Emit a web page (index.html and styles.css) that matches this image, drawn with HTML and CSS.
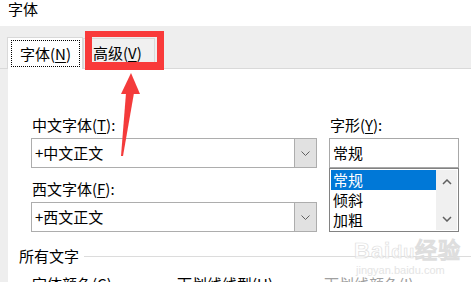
FILE: index.html
```html
<!DOCTYPE html>
<html lang="zh-CN">
<head>
    <meta charset="UTF-8">
    <meta name="viewport" content="width=device-width, initial-scale=1.0">
    <title>字体</title>
    <link rel="stylesheet" href="styles.css">
</head>
<body>
    <div class="title">字体</div>

    <div class="tabstrip">
        <div class="tab tab-active"><span class="focus">字体(<u>N</u>)</span></div>
        <div class="tab">高级(<u>V</u>)</div>
    </div>

    <div class="page">
        <div class="panel">
            <div class="fonts">
                <div class="col-left">
                    <div class="label">中文字体(<u>T</u>):</div>
                    <div class="combo">
                        <span class="combo-text">+中文正文</span>
                        <span class="combo-btn">
                            <svg width="9" height="5" viewBox="0 0 9 5"><path d="M0.5 0.5 L4.5 4.5 L8.5 0.5" fill="none" stroke="#606060" stroke-width="1"/></svg>
                        </span>
                    </div>
                    <div class="label label-second">西文字体(<u>F</u>):</div>
                    <div class="combo">
                        <span class="combo-text">+西文正文</span>
                        <span class="combo-btn">
                            <svg width="9" height="5" viewBox="0 0 9 5"><path d="M0.5 0.5 L4.5 4.5 L8.5 0.5" fill="none" stroke="#606060" stroke-width="1"/></svg>
                        </span>
                    </div>
                </div>
                <div class="col-right">
                    <div class="label">字形(<u>Y</u>):</div>
                    <div class="style-input">常规</div>
                    <div class="listbox">
                        <div class="list-items">
                            <div class="item selected">常规</div>
                            <div class="item">倾斜</div>
                            <div class="item">加粗</div>
                        </div>
                        <div class="scrollbar">
                            <svg width="10" height="6" viewBox="0 0 10 6"><path d="M1 5 L5 1 L9 5" fill="none" stroke="#606060" stroke-width="1.5"/></svg>
                            <svg width="10" height="6" viewBox="0 0 10 6"><path d="M1 1 L5 5 L9 1" fill="none" stroke="#606060" stroke-width="1.5"/></svg>
                        </div>
                    </div>
                </div>
            </div>

            <div class="group">
                <span>所有文字</span>
                <span class="group-line"></span>
            </div>

            <div class="bottom-row">
                <span class="bottom-label">字体颜色(<u>C</u>):</span>
                <span class="bottom-label">下划线线型(<u>U</u>):</span>
                <span class="bottom-label disabled">下划线颜色(<u>I</u>):</span>
            </div>
        </div>
    </div>

    <!-- annotation overlay -->
    <div class="mark-box"></div>
    <svg class="arrow" width="471" height="282" viewBox="0 0 471 282">
        <polygon points="131,73 140,94 121,94" fill="#f43b3b"/>
        <polygon points="126,93 134,93 123,156 121,156" fill="#f43b3b"/>
    </svg>

    <div class="watermark">
        <div class="wm-logo">Bai<span class="wm-du">du</span>经验</div>
        <div class="wm-url">jingyan.baidu.com</div>
    </div>
</body>
</html>
```

FILE: styles.css
```css
body {
    font-family: "Noto Sans CJK SC", "Microsoft YaHei", sans-serif;
    font-size: 15px;
    color: #000;
    background-color: #fff;
    margin: 0;
    padding: 0;
    width: 471px;
    height: 282px;
    overflow: hidden;
    position: relative;
}
u {
    text-decoration-thickness: 1px;
    text-underline-offset: 2px;
}
.title {
    height: 26px;
    line-height: 18px;
    padding-left: 8px;
}
.tabstrip {
    height: 42px;
    background-color: #eeeeee;
    border-bottom: 1px solid #d9d9d9;
    display: flex;
    align-items: flex-end;
    padding-left: 7px;
}
.tab {
    height: 30px;
    width: 72px;
    box-sizing: border-box;
    border: 1px solid #d9d9d9;
    border-bottom: none;
    background-color: #f0f0f0;
    line-height: 28px;
    padding-left: 9px;
}
.tab-active {
    height: 32px;
    width: 76px;
    margin-bottom: -1px;
    background-color: #fff;
    padding: 2px 2px 1px 3px;
    position: relative;
    z-index: 1;
}
.focus {
    display: block;
    height: 27px;
    border: 1px dotted #000;
    box-sizing: border-box;
    line-height: 25px;
    text-align: center;
}
.page {
    background-color: #eeeeee;
    padding-left: 8px;
    height: 213px;
}
.panel {
    background-color: #fff;
    height: 100%;
    padding: 46px 0 0 23px;
    box-sizing: border-box;
}
.fonts {
    display: flex;
    gap: 12px;
}
.col-left {
    width: 286px;
    display: flex;
    flex-direction: column;
}
.col-right {
    width: 130px;
    display: flex;
    flex-direction: column;
}
.label {
    line-height: 20px;
    margin-bottom: 3px;
    padding-left: 1px;
}
.label-second {
    margin-top: 11px;
}
.combo {
    height: 30px;
    box-sizing: border-box;
    border: 1px solid #adadad;
    display: flex;
}
.combo-text {
    flex: 1;
    line-height: 28px;
    padding-left: 3px;
}
.combo-btn {
    width: 21px;
    background-color: #e1e1e1;
    border-left: 1px solid #adadad;
    display: flex;
    align-items: center;
    justify-content: center;
}
.style-input {
    height: 30px;
    box-sizing: border-box;
    border: 1px solid #a8a8a8;
    line-height: 28px;
    padding-left: 3px;
}
.listbox {
    height: 64px;
    box-sizing: border-box;
    border: 1px solid #828282;
    display: flex;
    padding: 1px;
}
.list-items {
    flex: 1;
}
.item {
    height: 20px;
    line-height: 20px;
    padding-left: 2px;
}
.selected {
    background-color: #0078d7;
    color: #fff;
}
.scrollbar {
    width: 21px;
    background-color: #f0f0f0;
    display: flex;
    flex-direction: column;
    align-items: center;
    justify-content: space-between;
    padding: 9px 0 8px 0;
    box-sizing: border-box;
}
.group {
    display: flex;
    align-items: center;
    margin: 14px 0 0 -12px;
    line-height: 20px;
}
.group-line {
    flex: 1;
    height: 1px;
    background-color: #dcdcdc;
    margin-left: 5px;
}
.bottom-row {
    display: flex;
    margin-top: 8px;
    line-height: 20px;
    padding-left: 1px;
}
.bottom-label {
    width: 148px;
}
.bottom-label + .bottom-label {
    width: 150px;
}
.disabled {
    color: #a0a0a0;
}
.mark-box {
    position: absolute;
    left: 85px;
    top: 31px;
    width: 79px;
    height: 39px;
    box-sizing: border-box;
    border: 7px solid #f93a3a;
    border-top-width: 6px;
    border-bottom-width: 8px;
    z-index: 2;
}
.arrow {
    position: absolute;
    left: 0;
    top: 0;
    z-index: 3;
}
.watermark {
    position: absolute;
    left: 354px;
    top: 239px;
    color: rgba(255, 255, 255, 0.6);
    font-family: "Liberation Sans", Arial, sans-serif;
    z-index: 4;
}
.wm-logo {
    font-size: 22px;
    font-weight: bold;
    line-height: 24px;
    letter-spacing: 1px;
    -webkit-text-stroke: 0.7px #dedede;
}
.wm-logo .wm-du {
    font-size: 18px;
}
.wm-url {
    font-size: 11px;
    line-height: 12px;
    color: #e4e4e4;
    padding-left: 2px;
}
```
